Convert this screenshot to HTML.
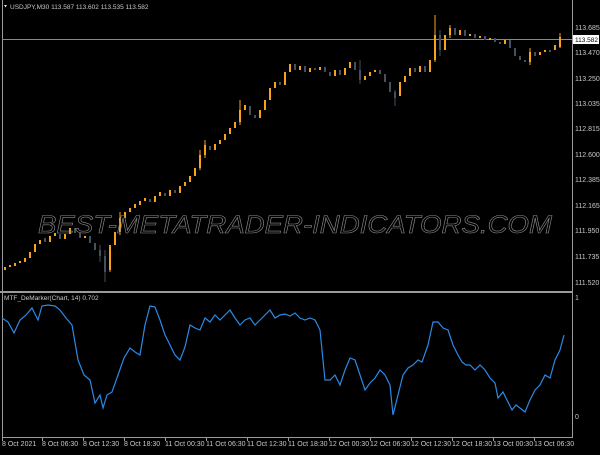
<!DOCTYPE html><html><head><style>body{margin:0;background:#000;width:600px;height:450px;overflow:hidden}svg text{font-family:"Liberation Sans",sans-serif;font-size:7px;fill:#c8c8c8}</style></head><body>
<svg width="600" height="450" viewBox="0 0 600 450" xmlns="http://www.w3.org/2000/svg">
<rect width="600" height="450" fill="#000"/>
<g stroke="#9a9a9a" fill="none">
<line x1="2.5" y1="0" x2="2.5" y2="437"/>
<line x1="572.5" y1="0" x2="572.5" y2="437"/>
<line x1="2" y1="437.5" x2="573" y2="437.5"/>
<line x1="0" y1="292" x2="573" y2="292" stroke-width="2"/>
<line x1="2" y1="39.5" x2="572" y2="39.5" stroke="#8a8a8a"/>
</g>
<g stroke-width="2" fill="none">
<path stroke="#f7a21b" d="M5 270V267M10 267V265M15 266V263M20 263V261M25 262V258M30 258V252M35 252V244M40 244V240M50 242V236M55 236V233M65 239V234M70 234V228M85 238V236M110 270V245M115 245V232M120 232V218M125 218V212M130 212V208M135 208V204M140 205V201M145 201V198M155 202V196M160 196V192M170 196V190M180 193V186M185 186V182M190 182V176M195 176V168M200 168V155M205 155V145M215 150V144M220 144V140M225 140V134M230 134V128M235 128V122M240 122V110M245 110V105M260 118V110M265 110V100M270 100V88M275 88V82M285 85V72M290 72V64M300 70V66M310 72V68M320 70V67M335 76V70M345 75V68M350 68V62M365 80V76M370 76V72M375 72V70M400 96V82M405 82V76M410 76V68M420 72V66M430 72V60M435 60V35M445 50V35M450 35V28M460 35V30M470 36V34M480 38V36M490 40V38M505 44V40M530 62V52M540 55V52M545 52V50M555 50V45M560 47V37"/>
<path stroke="#44505e" d="M45 238V242M60 234V239M75 228V233M80 233V238M90 236V243M95 243V250M100 250V256M105 256V272M150 199V202M165 193V196M175 190V193M210 146V150M250 106V115M255 115V118M280 82V85M295 64V70M305 66V72M315 68V70M325 67V72M330 72V76M340 70V75M355 62V70M360 70V80M380 70V74M385 74V82M390 82V92M395 92V98M415 68V72M425 66V72M440 35V50M455 28V35M465 30V36M475 34V38M485 36V40M495 38V42M500 42V44M510 40V48M515 48V56M520 56V60M525 60V62M535 52V56M550 50V52"/>
</g>
<path stroke="#f7a21b" stroke-width="1" d="M110 272V262M435 62V15M560 48V33M530 65V48M205 158V140M240 125V100M200 170V150M120 235V212M450 38V25"/>
<path stroke="#44505e" stroke-width="1" d="M105 250V282M395 90V106M440 30V56M100 245V262M360 60V84"/>
<text x="38" y="233" textLength="514" lengthAdjust="spacingAndGlyphs" style="fill:none;stroke:#8a8a8a;stroke-width:0.6;font-size:25px;font-style:italic">BEST-METATRADER-INDICATORS.COM</text>
<polyline fill="none" stroke="#2b8ae6" stroke-width="1.2" points="2,318 8,322 14,333 20,320 26,315 32,308 38,320 42,306 48,305 55,306 60,310 66,318 72,325 78,360 84,375 90,380 95,403 100,395 103,408 107,395 112,392 118,375 124,358 130,348 135,352 140,355 145,325 150,306 155,307 160,320 165,335 170,345 175,355 180,360 185,347 190,325 195,328 200,330 205,318 210,322 215,315 220,320 225,315 230,310 235,318 240,325 245,320 250,318 255,325 260,320 265,315 270,310 275,318 280,315 285,314 290,316 295,313 300,318 305,320 310,318 315,320 320,330 325,380 330,380 335,375 340,385 345,370 350,358 355,360 360,375 365,390 370,383 375,378 380,370 385,375 390,385 393,415 398,395 403,375 408,368 413,365 418,360 422,362 428,345 433,322 438,322 443,328 448,330 453,345 458,355 462,362 466,365 470,365 475,370 480,365 485,370 490,378 495,383 498,398 503,392 508,402 512,410 516,405 520,408 525,412 530,400 535,390 540,385 545,375 550,378 555,360 560,350 564,335"/>
<path d="M4 5l3 0l-1.5 2.5z" fill="#ddd"/>
<text x="10" y="9" style="font-size:6.5px">USDJPY,M30  113.587 113.602 113.535 113.582</text>
<text x="4" y="300" style="font-size:6.5px">MTF_DeMarker(Chart, 14) 0.702</text>
<g style="font-size:6.5px">
<text x="575" y="30">113.685</text><text x="575" y="55">113.470</text><text x="575" y="81">113.250</text><text x="575" y="106">113.035</text><text x="575" y="131">112.815</text><text x="575" y="157">112.600</text><text x="575" y="182">112.385</text><text x="575" y="208">112.165</text><text x="575" y="233">111.950</text><text x="575" y="259">111.735</text><text x="575" y="285">111.520</text>
<text x="575" y="300">1</text><text x="575" y="419">0</text>
</g>
<rect x="573" y="35" width="26" height="9" fill="#fff"/>
<text x="575" y="42" style="fill:#000;font-size:6.5px">113.582</text>
<g stroke="#9a9a9a"><path d="M2.5 437V441M42.5 437V441M83.5 437V441M124.5 437V441M165.5 437V441M206.5 437V441M247.5 437V441M288.5 437V441M329.5 437V441M370.5 437V441M411.5 437V441M452.5 437V441M493.5 437V441M534.5 437V441"/></g>
<g style="font-size:6.3px">
<text x="2" y="446">8 Oct 2021</text><text x="42" y="446">8 Oct 06:30</text><text x="83" y="446">8 Oct 12:30</text><text x="124" y="446">8 Oct 18:30</text><text x="165" y="446">11 Oct 00:30</text><text x="206" y="446">11 Oct 06:30</text><text x="247" y="446">11 Oct 12:30</text><text x="288" y="446">11 Oct 18:30</text><text x="329" y="446">12 Oct 00:30</text><text x="370" y="446">12 Oct 06:30</text><text x="411" y="446">12 Oct 12:30</text><text x="452" y="446">12 Oct 18:30</text><text x="493" y="446">13 Oct 00:30</text><text x="534" y="446">13 Oct 06:30</text>
</g>
</svg></body></html>
